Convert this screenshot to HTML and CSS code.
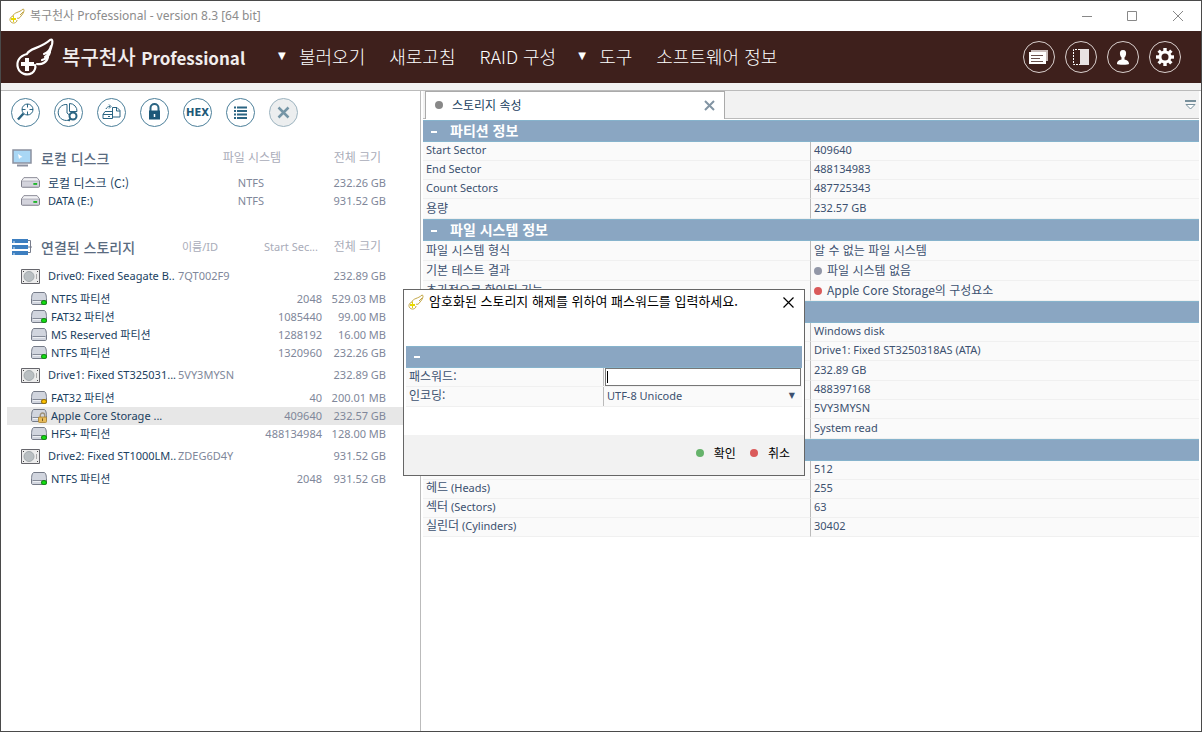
FILE: index.html
```html
<!DOCTYPE html>
<html lang="ko">
<head>
<meta charset="utf-8">
<title>복구천사 Professional</title>
<link rel="stylesheet" href="styles.css">
</head>
<body>
<svg class="defs" aria-hidden="true">
  <symbol id="wing" viewBox="0 0 40 40">
    <path d="M12 17 C14 11 25 12 35 3 C38 1 38 6 36 11 C35 15 33 18 30 20 M36 9 C35 14 32 16 29 17 M35 15 C34 19 31 22 27 23 M33 20 C32 25 27 28 22 27 M12 17 C4 19 1 25 3 31 C5 37 12 39 17 36 C20 34 21 30 20 28" fill="none" stroke="currentColor" stroke-width="2.2" stroke-linecap="round" stroke-linejoin="round"/>
    <path d="M10 21h4v4h5v4h-5v5h-4v-5H6v-4h4z" fill="currentColor"/>
  </symbol>
  <symbol id="gold-wing" viewBox="0 0 16 16">
    <path d="M4 8 C5 4 10 5 14 1 C16 1 15 5 12 8 C11 10 9 11 8 10 M14 4 L11 7 M4 8 C1 9 0 12 2 14 C4 16 8 15 8 12" fill="none" stroke="#c2a544" stroke-width="1"/>
    <path d="M4 8h1v2h2v2H5v2H4v-2H2v-2h2z" fill="#e8d800"/>
  </symbol>
  <symbol id="disk" viewBox="0 0 20 11">
    <path d="M3 .5h14L19.500 4v5.500a1 1 0 0 1-1 1h-17a1 1 0 0 1-1-1V4z" fill="#d3d3dc" stroke="#777784"/>
    <path d="M3 1h14l2 3H1z" fill="#f2f2f5"/><path d="M1 4h18" stroke="#aeaeb8"/>
    <path d="M13 6h4v2h-4z" fill="#1fb52b"/>
  </symbol>
  <symbol id="drive" viewBox="0 0 19 15">
    <path d="M.5.5h18v14H.5z" fill="#ececec" stroke="#66666c"/>
    <circle cx="8" cy="7.500" r="5" fill="#b9bfc2" stroke="#a2a9ac"/>
    <path d="M2 2h1v1H2zM16 2h1v1h-1zM2 12h1v1H2zM16 12h1v1h-1z" fill="#444"/><path d="M15 5h1v5h-1z" fill="#aaa"/>
  </symbol>
  <symbol id="part" viewBox="0 0 16 13">
    <path d="M3 .5h10c2 0 2.500 4 2.500 7.500v3c0 1-.5 1.500-1.500 1.500H2C1 12.500.5 12 .5 11V8C.5 4.500 1 .5 3 .5z" fill="#d1d5de" stroke="#757b88"/>
    <path d="M1.500 8.500h13" stroke="#858b98"/><path d="M2 9.500h12" stroke="#eef0f4"/>
  </symbol>
  <symbol id="lock" viewBox="0 0 10 12">
    <path d="M2.500 6V3.500a2.500 2.500 0 0 1 5 0V6" fill="none" stroke="#9c9078" stroke-width="1.500"/>
    <rect x=".5" y="5.500" width="9" height="6" rx="1" fill="#e8bc5b" stroke="#a88337"/><path d="M5 7v3" stroke="#6b5220"/>
  </symbol>
</svg>
<div class="window">
  <header class="titlebar">
    <svg class="i16"><use href="#gold-wing"/></svg>
    <span class="caption">복구천사 Professional - version 8.3 [64 bit]</span>
    <button class="winbtn" aria-label="최소화"><svg width="11" height="11"><path d="M0 5.500h10" stroke="#888"/></svg></button>
    <button class="winbtn" aria-label="최대화"><svg width="11" height="11"><path d="M.5.5h9v9h-9z" fill="none" stroke="#888"/></svg></button>
    <button class="winbtn" aria-label="닫기"><svg width="11" height="11"><path d="M0 0l10 10M10 0L0 10" stroke="#888"/></svg></button>
  </header>

  <div class="appbar">
    <svg class="logo"><use href="#wing"/></svg>
    <h1 class="brand">복구천사 <span class="brand-en">Professional</span></h1>
    <nav class="menu">
      <button class="menu-item"><span class="caret">▼</span>불러오기</button>
      <button class="menu-item">새로고침</button>
      <button class="menu-item"><span>RAID 구성</span></button>
      <button class="menu-item near"><span class="caret">▼</span>도구</button>
      <button class="menu-item">소프트웨어 정보</button>
    </nav>
    <div class="actions">
      <button class="round" aria-label="메시지"><svg width="20" height="14"><path d="M3 3V1h15v9h-1" fill="none" stroke="#c9bcba" stroke-width="2"/><path d="M0 2h17v12H0z" fill="#fff"/><path d="M2 5.500h12M2 8.500h9M2 11.500h12" stroke="#6a504c"/></svg></button>
      <button class="round" aria-label="패널"><svg width="17" height="17"><path d="M7 .5H.5v15H7" fill="none" stroke="#fff" stroke-dasharray="2 1"/><path d="M7 0h9v16H7z" fill="#e8e2e2"/></svg></button>
      <button class="round" aria-label="사용자"><svg width="12" height="15"><path d="M6 0c2.500 0 3.500 2 3 4.500C8.700 6 8 7 7.500 7.500v2c2 .7 4.500 1 4.500 4.500 0 1-12 1-12 0 0-3.500 2.500-3.800 4.500-4.500v-2C4 7 3.300 6 3 4.500 2.500 2 3.500 0 6 0z" fill="#fff"/></svg></button>
      <button class="round" aria-label="설정"><svg width="18" height="18" viewBox="0 0 18 18"><g fill="#fff"><path d="M7.300 0h3.400v18H7.300z"/><path d="M7.300 0h3.400v18H7.300z" transform="rotate(45 9 9)"/><path d="M7.300 0h3.400v18H7.300z" transform="rotate(90 9 9)"/><path d="M7.300 0h3.400v18H7.300z" transform="rotate(135 9 9)"/><circle cx="9" cy="9" r="6.500"/></g><circle cx="9" cy="9" r="3.500" fill="#3e201c"/></svg></button>
    </div>
  </div>

  <main class="body">
    <section class="left">
      <div class="tools">
        <button class="tool" aria-label="검색"><svg viewBox="0 0 27 27"><circle cx="15.500" cy="10.500" r="5.500"/><path d="M15.500 5v3.500M15.500 12.500V16M10 10.500h3.500M17.500 10.500H21"/><path d="M11.500 14.500L6 20.500" stroke-width="2.500"/></svg></button>
        <button class="tool" aria-label="디스크 분석"><svg viewBox="0 0 27 27"><path d="M12 5.500a8 8 0 1 0 3 15M12 5.500V14l6 5M14.500 4.500v8H22a7.500 7.500 0 0 0-7.500-8z"/><circle cx="18" cy="17" r="3.500" fill="#fff" stroke-width="2"/><path d="M15.500 19.500l-2 2.500" stroke-width="2"/></svg></button>
        <button class="tool" aria-label="이미지 만들기"><svg viewBox="0 0 27 27"><path d="M14.500 8.500H19l3 3v6.500h-7.500zM18.500 8.500V12H22M5 15.500h9.500v4H5zM5 15.500l2-3h7.500M8 10c.5-1.500 2-2.500 4-2.500M11 5.500l2 2-2 2M10 17.500h2"/></svg></button>
        <button class="tool" aria-label="잠금"><svg viewBox="0 0 27 27"><path d="M9.500 12V9a4 4 0 0 1 8 0v3" stroke-width="2"/><path d="M8 11.500h11v9H8z" fill="#1d5878" stroke="none"/><path d="M13.500 15v3" stroke="#fff" stroke-width="1.500"/></svg></button>
        <button class="tool hex">HEX</button>
        <button class="tool" aria-label="목록"><svg viewBox="0 0 27 27"><path d="M7 8.500h2M7 12h2M7 15.500h2M7 19h2M10 8.500h10M10 12h10M10 15.500h10M10 19h10" stroke-width="2"/></svg></button>
        <button class="tool off" aria-label="중지"><svg viewBox="0 0 27 27"><path d="M8.500 8.500l10 10M18.500 8.500l-10 10" stroke-width="2.500"/></svg></button>
      </div>

      <table class="tree">
        <colgroup><col class="c-name"><col class="c-id"><col class="c-sector"><col class="c-size"><col></colgroup>
        <thead><tr class="group">
          <th><span class="node"><svg class="big" viewBox="0 0 21 18"><path d="M1 1h18v13H1z" fill="#a9d7f5" stroke="#8c91a0" stroke-width="1.500"/><path d="M6 5l1 5 1.500-1.500 2-.5z" fill="#fff"/><path d="M5 16.500h11" stroke="#8c91a0" stroke-width="2"/></svg>로컬 디스크</span></th>
          <th colspan="2" class="fs">파일 시스템</th><th class="size">전체 크기</th><th></th></tr></thead>
        <tbody>
          <tr><td><span class="node d1"><svg class="disk"><use href="#disk"/></svg><span class="ko">로컬 디스크 (C:)</span></span></td><td></td><td class="fs2">NTFS</td><td>232.26 GB</td><td></td></tr>
          <tr><td><span class="node d1"><svg class="disk"><use href="#disk"/></svg>DATA (E:)</span></td><td></td><td class="fs2">NTFS</td><td>931.52 GB</td><td></td></tr>
        </tbody>
      </table>

      <table class="tree second">
        <colgroup><col class="c-name"><col class="c-id"><col class="c-sector"><col class="c-size"><col></colgroup>
        <thead><tr class="group">
          <th><span class="node"><svg class="big" viewBox="0 0 21 18"><path d="M0 1h16v4H0zM0 7h16v4H0zM0 13h16v4H0z" fill="#3d7fc0"/><path d="M1 4h2M1 10h2M1 16h2" stroke="#d5e8f8"/><path d="M16 2.500h2.500v12H16M16 9h4" fill="none" stroke="#777d8c"/></svg>연결된 스토리지</span></th>
          <th class="idh">이름/ID</th><th class="sec">Start Sec...</th><th class="size">전체 크기</th><th></th></tr></thead>
        <tbody>
          <tr class="drive"><td><span class="node d1"><svg class="drv"><use href="#drive"/></svg>Drive0: Fixed Seagate B..</span></td><td class="id">7QT002F9</td><td></td><td>232.89 GB</td><td></td></tr>
          <tr><td><span class="node d2"><span class="pic"><svg class="part"><use href="#part"/></svg><i class="led"></i></span>NTFS 파티션</span></td><td></td><td>2048</td><td>529.03 MB</td><td></td></tr>
          <tr><td><span class="node d2"><span class="pic"><svg class="part"><use href="#part"/></svg><i class="led"></i></span>FAT32 파티션</span></td><td></td><td>1085440</td><td>99.00 MB</td><td></td></tr>
          <tr><td><span class="node d2"><span class="pic"><svg class="part"><use href="#part"/></svg></span>MS Reserved 파티션</span></td><td></td><td>1288192</td><td>16.00 MB</td><td></td></tr>
          <tr><td><span class="node d2"><span class="pic"><svg class="part"><use href="#part"/></svg><i class="led"></i></span>NTFS 파티션</span></td><td></td><td>1320960</td><td>232.26 GB</td><td></td></tr>
          <tr class="drive"><td><span class="node d1"><svg class="drv"><use href="#drive"/></svg>Drive1: Fixed ST325031...</span></td><td class="id">5VY3MYSN</td><td></td><td>232.89 GB</td><td></td></tr>
          <tr><td><span class="node d2"><span class="pic"><svg class="part"><use href="#part"/></svg><i class="led amber"></i></span>FAT32 파티션</span></td><td></td><td>40</td><td>200.01 MB</td><td></td></tr>
          <tr class="selected"><td><span class="node d2"><span class="pic"><svg class="part"><use href="#part"/></svg><svg class="lock"><use href="#lock"/></svg></span>Apple Core Storage ...</span></td><td></td><td>409640</td><td>232.57 GB</td><td></td></tr>
          <tr><td><span class="node d2"><span class="pic"><svg class="part"><use href="#part"/></svg><i class="led"></i></span>HFS+ 파티션</span></td><td></td><td>488134984</td><td>128.00 MB</td><td></td></tr>
          <tr class="drive"><td><span class="node d1"><svg class="drv"><use href="#drive"/></svg>Drive2: Fixed ST1000LM..</span></td><td class="id">ZDEG6D4Y</td><td></td><td>931.52 GB</td><td></td></tr>
          <tr><td><span class="node d2"><span class="pic"><svg class="part"><use href="#part"/></svg><i class="led"></i></span>NTFS 파티션</span></td><td></td><td>2048</td><td>931.52 GB</td><td></td></tr>
        </tbody>
      </table>
    </section>

    <section class="right">
      <div class="tabs">
        <div class="tab"><i class="dot gray"></i><span class="ko">스토리지 속성</span><button class="tab-close" aria-label="탭 닫기"><svg width="11" height="11"><path d="M1 1l9 9M10 1l-9 9" stroke="#8294a3" stroke-width="2"/></svg></button></div>
        <button class="tab-more" aria-label="탭 목록"><svg width="11" height="10"><path d="M0 1h11" stroke="#78909c" stroke-width="2"/><path d="M1 4.500h9L5.500 9z" fill="#fff" stroke="#78909c"/></svg></button>
      </div>
      <table class="props">
        <colgroup><col class="half"><col></colgroup>
        <tbody>
          <tr class="head"><th colspan="2"><i class="minus"></i>파티션 정보</th></tr>
          <tr><td>Start Sector</td><td>409640</td></tr>
          <tr><td>End Sector</td><td>488134983</td></tr>
          <tr><td>Count Sectors</td><td>487725343</td></tr>
          <tr class="tall"><td class="ko">용량</td><td>232.57 GB</td></tr>
          <tr class="head"><th colspan="2"><i class="minus"></i>파일 시스템 정보</th></tr>
          <tr class="tall"><td class="ko">파일 시스템 형식</td><td class="ko">알 수 없는 파일 시스템</td></tr>
          <tr class="tall"><td class="ko">기본 테스트 결과</td><td class="ko"><i class="dot slate"></i>파일 시스템 없음</td></tr>
          <tr class="tall"><td class="ko">추가적으로 확인된 기능</td><td class="ko"><i class="dot red"></i>Apple Core Storage의 구성요소</td></tr>
          <tr class="head"><th colspan="2"><i class="minus"></i></th></tr>
          <tr><td></td><td>Windows disk</td></tr>
          <tr><td></td><td>Drive1: Fixed ST3250318AS (ATA)</td></tr>
          <tr class="tall"><td></td><td>232.89 GB</td></tr>
          <tr><td></td><td>488397168</td></tr>
          <tr><td></td><td>5VY3MYSN</td></tr>
          <tr class="tall"><td></td><td>System read</td></tr>
          <tr class="head"><th colspan="2"><i class="minus"></i></th></tr>
          <tr><td></td><td>512</td></tr>
          <tr><td><span class="ko">헤드</span> (Heads)</td><td>255</td></tr>
          <tr><td><span class="ko">섹터</span> (Sectors)</td><td>63</td></tr>
          <tr><td><span class="ko">실린더</span> (Cylinders)</td><td>30402</td></tr>
        </tbody>
      </table>
    </section>
  </main>

  <form class="dialog" role="dialog" aria-labelledby="dlg-title">
    <div class="dlg-title">
      <svg class="i16"><use href="#gold-wing"/></svg>
      <h2 id="dlg-title">암호화된 스토리지 해제를 위하여 패스워드를 입력하세요.</h2>
      <button type="button" class="dlg-close" aria-label="닫기"><svg width="11" height="11"><path d="M.5.5l10 10M10.500.5l-10 10" stroke="#000" stroke-width="1.200"/></svg></button>
    </div>
    <div class="dlg-head"><i class="minus"></i></div>
    <div class="field"><label class="ko" for="pw">패스워드:</label><div class="control"><input id="pw" type="text"><i class="cursor"></i></div></div>
    <div class="field"><label class="ko" for="enc">인코딩:</label><div class="control"><select id="enc"><option>UTF-8 Unicode</option></select><span class="drop">▼</span></div></div>
    <div class="dlg-foot">
      <button type="button" class="act"><i class="dot green"></i>확인</button>
      <button type="button" class="act"><i class="dot red"></i>취소</button>
    </div>
  </form>
</div>
</body>
</html>
```

FILE: styles.css
```css
* { box-sizing: border-box; }
body {
  margin: 0;
  font: 11px/16px "Noto Sans", "Noto Sans CJK KR", sans-serif;
  color: #1b3f5f;
}
button { font: inherit; color: inherit; background: none; border: 0; padding: 0; }
svg { flex: none; display: block; }
.defs { position: absolute; width: 0; height: 0; }
.ko { font-family: "Noto Sans CJK KR", sans-serif; font-size: 12px; }
.i16 { width: 16px; height: 16px; }

.window {
  position: relative;
  display: flex;
  flex-direction: column;
  min-height: 100vh;
  border: 1px solid #4a4a4a;
  background: #fff;
}
.titlebar { display: flex; align-items: center; height: 30px; padding-left: 8px; }
.caption { flex: 1; margin-left: 5px; font-size: 12px; color: #8c8c8c; }
.winbtn { width: 45px; display: flex; justify-content: center; }
.winbtn:last-child { width: 46px; }

.appbar { display: flex; align-items: center; height: 52px; padding: 0 20px 0 14px; background: #3e201c; color: #fff; }
.logo { width: 40px; height: 40px; }
.brand { margin: 0 0 0 7px; width: 216px; font: 500 20px/30px "Noto Sans CJK KR", sans-serif; color: #f1eded; white-space: nowrap; }
.brand-en { font-size: 17px; font-weight: 700; }
.menu { display: flex; align-items: center; gap: 24px; flex: 1; padding-bottom: 2px; font: 300 18px/30px "Noto Sans CJK KR", sans-serif; white-space: nowrap; }
.menu-item { display: flex; align-items: center; gap: 6px; }
.near { margin-left: -2px; }
.caret { width: 15px; font: 10px/12px "DejaVu Sans", sans-serif; text-align: left; }
.actions { display: flex; gap: 10px; }
.round { width: 32px; height: 32px; border: 1px solid #d9cfcd; border-radius: 50%; display: grid; place-items: center; }

.body { flex: 1; display: flex; border-top: 7px solid #f2f2f2; }
.left { flex: 0 0 35%; border-top: 1px solid #bbb; border-right: 1px solid #bbb; padding: 7px 0 0 6px; }
.tools { display: flex; gap: 14px; padding-left: 4px; margin-bottom: 15px; }
.tool { width: 29px; height: 29px; border: 1px solid #4c7f9a; border-radius: 50%; display: grid; place-items: center; overflow: hidden; }
.tool svg { width: 27px; height: 27px; fill: none; stroke: #2b6583; }
.hex { font: 700 10px/12px "DejaVu Sans", sans-serif; color: #1d5878; }
.off { background: #eceeef; border-color: #9db4c0; }
.off svg { stroke: #7595a6; }

.tree { width: 100%; border-collapse: collapse; table-layout: fixed; }
.tree td, .tree th { padding: 0 0 1px; height: 18px; line-height: 16px; text-align: right; color: #80879a; font-weight: 400; white-space: nowrap; }
.tree .group th { height: 32px; padding-bottom: 1px; font-size: 12px; color: #a9acb9; }
.tree .group th:first-child { font: 500 14px/20px "Noto Sans CJK KR", sans-serif; color: #5a6b80; }
.tree td:first-child, .tree th:first-child { text-align: left; color: #1b3f5f; }
.tree .group .fs { padding-right: 41px; }
.tree .fs2 { padding-right: 58px; }
.tree .group .size { padding-right: 5px; }
.tree .group .sec { padding-right: 4px; font-size: 11px; }
.tree .id { text-align: left; }
.tree .group .idh { text-align: left; padding-left: 4px; font-size: 11px; }
.tree .drive td { height: 27px; }
.selected { background: #e7e7e7; }
.second { margin-top: 21px; }
.c-name { width: 171px; }
.c-id { width: 54px; }
.c-sector { width: 90px; }
.c-size { width: 64px; }
.node { display: flex; align-items: center; }
.d1 { padding-left: 14px; gap: 8px; }
.d2 { padding-left: 24px; gap: 4px; }
.big { width: 21px; height: 18px; margin: 0 8px 0 5px; }
.disk { width: 19px; height: 11px; }
.drv { width: 19px; height: 15px; }
.part { width: 16px; height: 13px; }
.pic { position: relative; }
.led { position: absolute; right: 0; bottom: 0; width: 6px; height: 5px; border: 1px solid #138a13; border-radius: 50%; background: #12e012; }
.amber { background: #ffc400; border-color: #9b7200; }
.lock { position: absolute; right: 0; bottom: -1px; width: 9px; height: 11px; }

.right { flex: 1; min-width: 0; border-top: 1px solid #bbb; padding: 0 2px 0 2px; }
.tabs { display: flex; justify-content: space-between; height: 28px; margin-bottom: 1px; padding: 0 3px 0 2px; background: #f2f2f2; border-bottom: 1px solid #bbb; }
.tab { display: flex; align-items: center; width: 300px; height: 28px; padding: 0 9px 1px; background: #fff; border: 1px solid #aaa; border-width: 1px 1px 0; }
.tab .ko { flex: 1; margin-left: 9px; }
.dot { display: inline-block; flex: none; width: 8px; height: 8px; border-radius: 50%; }
.gray { background: #888; }
.slate { background: #9297a7; }
.red { background: #da5a5a; }
.green { background: #66b36b; }

.props { width: 100%; border-collapse: separate; border-spacing: 0; table-layout: fixed; color: #3c5170; }
.half { width: 50%; }
.props td { height: 19px; padding: 0 3px 3px; line-height: 15px; background: #fafafa; border-bottom: 1px solid #f0f0f0; white-space: nowrap; }
.props td span { line-height: 14px; }
.props td:first-child { border-right: 1px solid #bbb; }
.props .tall td { height: 20px; }
.props td .dot { margin-right: 5px; }
.props th { height: 22px; padding: 0 8px 2px; font: 700 14px/16px "Noto Sans CJK KR", sans-serif; color: #fff; text-align: left; }
.head th, .dlg-head { background: #8aa6c2; border: 1px solid #86b3cc; border-width: 1px 0; }
.minus { display: inline-block; width: 6px; height: 2px; margin-right: 13px; background: #fff; vertical-align: middle; }

.dialog { position: absolute; left: calc(50% - 198px); top: 288px; width: 402px; border: 1px solid #666; background: #fff; }
.dlg-title { display: flex; align-items: center; height: 24px; margin-bottom: 32px; padding: 0 10px 0 4px; }
.dlg-title h2 { flex: 1; margin: 0 0 0 5px; padding-bottom: 2px; font: 400 13px/20px "Noto Sans CJK KR", sans-serif; color: #000; }
.dlg-head { display: flex; align-items: center; height: 22px; margin: 0 2px; padding-left: 8px; }
.field { display: grid; grid-template-columns: 1fr 1fr; height: 19px; margin: 0 2px; background: #fafafa; border-bottom: 1px solid #f0f0f0; color: #3c5170; }
.field + .field { height: 20px; }
.field label { padding-left: 3px; line-height: 16px; border-right: 1px solid #bbb; }
.control { position: relative; display: flex; padding: 0 1px; }
.control input { width: 100%; height: 18px; border: 1px solid #777; padding: 0 3px; outline: 0; background: #fff; }
.control select { width: 100%; appearance: none; border: 0; padding: 0 2px 2px; background: none; font: inherit; color: inherit; }
.cursor { position: absolute; left: 3px; top: 3px; width: 1px; height: 12px; background: #000; }
.drop { position: absolute; right: 7px; top: 2px; font: 8px/14px "DejaVu Sans", sans-serif; pointer-events: none; }
.dlg-foot { display: flex; justify-content: flex-end; gap: 14px; height: 40px; margin-top: 28px; padding: 0 14px 4px; background: #f2f2f2; }
.act { display: flex; align-items: center; gap: 10px; font: 12px/16px "Noto Sans CJK KR", sans-serif; color: #000; }
```
